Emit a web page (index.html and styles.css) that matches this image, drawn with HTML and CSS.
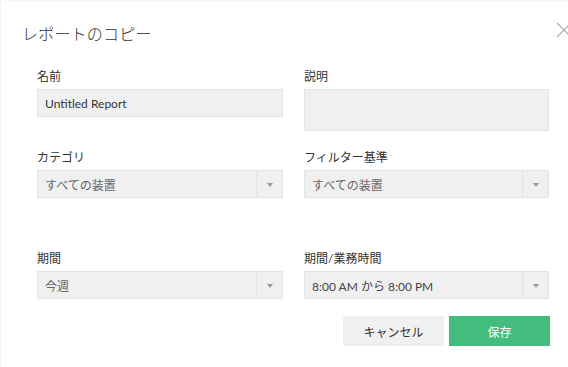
FILE: index.html
```html
<!DOCTYPE html>
<html lang="ja">
<head>
    <meta charset="UTF-8">
    <meta name="viewport" content="width=device-width, initial-scale=1.0">
    <title>レポートのコピー</title>
    <link rel="stylesheet" href="styles.css">
</head>
<body>
    <div class="dialog">
        <!-- Header -->
        <div class="dialog-header">
            <h2 class="dialog-title">レポートのコピー</h2>
            <button type="button" class="close-btn" aria-label="閉じる">
                <svg width="16" height="16" viewBox="0 0 16 16">
                    <path d="M1 1 L15 15 M15 1 L1 15" stroke="#a8a8a8" stroke-width="1.1" fill="none"/>
                </svg>
            </button>
        </div>

        <!-- Form -->
        <div class="form-grid">
            <div class="field">
                <label class="field-label">名前</label>
                <input type="text" class="text-input" value="Untitled Report">
            </div>
            <div class="field">
                <label class="field-label">説明</label>
                <textarea class="text-area"></textarea>
            </div>

            <div class="field row-2">
                <label class="field-label">カテゴリ</label>
                <div class="select-box">
                    <span class="select-value">すべての装置</span>
                    <span class="select-arrow"></span>
                </div>
            </div>
            <div class="field row-2">
                <label class="field-label">フィルター基準</label>
                <div class="select-box">
                    <span class="select-value">すべての装置</span>
                    <span class="select-arrow"></span>
                </div>
            </div>

            <div class="field row-3">
                <label class="field-label">期間</label>
                <div class="select-box">
                    <span class="select-value">今週</span>
                    <span class="select-arrow"></span>
                </div>
            </div>
            <div class="field row-3">
                <label class="field-label">期間/業務時間</label>
                <div class="select-box">
                    <span class="select-value dark">8:00 AM から 8:00 PM</span>
                    <span class="select-arrow"></span>
                </div>
            </div>
        </div>

        <!-- Buttons -->
        <div class="dialog-actions">
            <button type="button" class="btn btn-cancel">キャンセル</button>
            <button type="button" class="btn btn-save">保存</button>
        </div>
    </div>
</body>
</html>
```

FILE: styles.css
```css
body {
    margin: 0;
    background-color: #fff;
    font-family: Lato, "Noto Sans CJK JP", sans-serif;
    color: #333;
}
.dialog {
    height: 367px;
    box-sizing: border-box;
    border-left: 1px solid #f3f3f3;
    border-top: 1px solid #f7f7f7;
    overflow: hidden;
}
.dialog-header {
    display: flex;
    justify-content: space-between;
    align-items: center;
    height: 43px;
    padding: 10px 0 0 21px;
}
.dialog-title {
    margin: 0;
    font-size: 16px;
    font-weight: 300;
    color: #333;
    letter-spacing: 0.2px;
}
.close-btn {
    border: none;
    background: none;
    padding: 0;
    margin-right: -4px;
    margin-top: -5px;
    width: 16px;
    height: 16px;
    cursor: pointer;
}
.form-grid {
    display: grid;
    grid-template-columns: 246px 245px;
    column-gap: 21px;
    padding: 14px 0 0 36px;
}
.field {
    display: flex;
    flex-direction: column;
}
.row-2 {
    margin-top: 18px;
}
.row-3 {
    margin-top: 52px;
}
.field-label {
    font-size: 12px;
    line-height: 18px;
    margin-bottom: 3px;
    color: #333;
}
.text-input, .text-area, .select-box {
    box-sizing: border-box;
    width: 100%;
    background-color: #f0f0f0;
    border: 1px solid #e3e3e3;
    font-family: inherit;
    font-size: 12px;
    color: #333;
    margin: 0;
}
.text-input {
    height: 28px;
    padding: 0 7px;
}
.text-area {
    height: 42px;
    resize: none;
    display: block;
}
.select-box {
    height: 28px;
    display: flex;
    align-items: center;
}
.select-value {
    flex: 1;
    padding-left: 7px;
    color: #666;
}
.select-value.dark {
    color: #444;
}
.select-arrow {
    width: 25px;
    height: 100%;
    border-left: 1px solid #e3e3e3;
    position: relative;
}
.select-arrow::after {
    content: "";
    position: absolute;
    left: 10px;
    top: 12px;
    border-left: 3px solid transparent;
    border-right: 3px solid transparent;
    border-top: 4px solid #999;
}
.dialog-actions {
    display: flex;
    justify-content: flex-end;
    gap: 5px;
    padding: 17px 18px 0 0;
}
.btn {
    width: 101px;
    height: 30px;
    border: none;
    font-family: inherit;
    font-size: 12px;
    cursor: pointer;
}
.btn-cancel {
    background-color: #f0f0f0;
    color: #333;
}
.btn-save {
    background-color: #43bd7e;
    color: #fff;
}
```
